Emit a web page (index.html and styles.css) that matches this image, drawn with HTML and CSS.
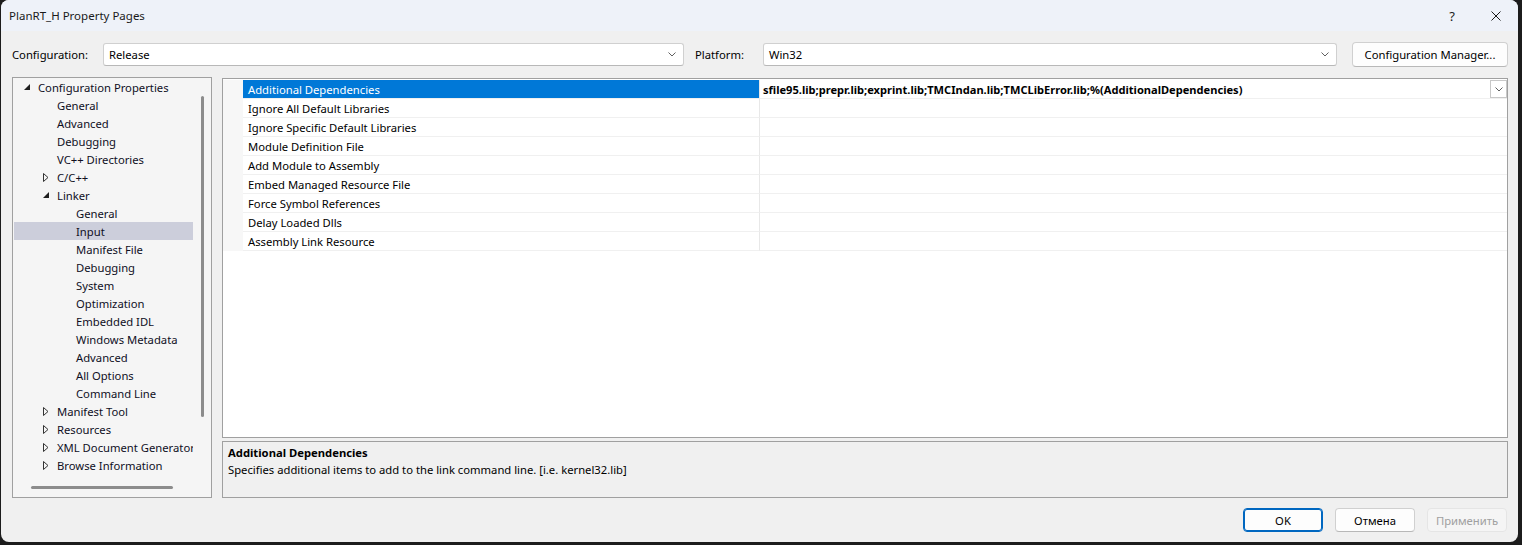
FILE: index.html
```html
<!DOCTYPE html>
<html lang="en">
<head>
    <meta charset="UTF-8">
    <title>PlanRT_H Property Pages</title>
    <link rel="stylesheet" href="styles.css">
</head>
<body>
    <div class="window">
        <div class="titlebar">
            <span class="title">PlanRT_H Property Pages</span>
            <div class="caption-btns">
                <span class="cap-btn help">?</span>
                <span class="cap-btn close">
                    <svg width="10" height="10" viewBox="0 0 10 10"><path d="M0.5 0.5 L9.5 9.5 M9.5 0.5 L0.5 9.5" stroke="#1a1a1a" stroke-width="1" fill="none"/></svg>
                </span>
            </div>
        </div>

        <div class="config-row">
            <label class="cfg-label">Configuration:</label>
            <div class="combo combo-config">
                <span>Release</span>
                <svg class="chev" width="8" height="5" viewBox="0 0 8 5"><path d="M0.5 0.5 L4 4 L7.5 0.5" stroke="#606060" fill="none"/></svg>
            </div>
            <label class="cfg-label platform-label">Platform:</label>
            <div class="combo combo-platform">
                <span>Win32</span>
                <svg class="chev" width="8" height="5" viewBox="0 0 8 5"><path d="M0.5 0.5 L4 4 L7.5 0.5" stroke="#606060" fill="none"/></svg>
            </div>
            <button class="btn btn-manager">Configuration Manager...</button>
        </div>

        <div class="main">
            <div class="tree">
                <div class="tree-items">
                    <div class="node lvl0"><span class="exp"><svg width="6" height="6" viewBox="0 0 6 6"><path d="M6 0 L6 6 L0 6 Z" fill="#1e1e1e"/></svg></span>Configuration Properties</div>
                    <div class="node lvl1"><span class="exp"></span>General</div>
                    <div class="node lvl1"><span class="exp"></span>Advanced</div>
                    <div class="node lvl1"><span class="exp"></span>Debugging</div>
                    <div class="node lvl1"><span class="exp"></span>VC++ Directories</div>
                    <div class="node lvl1"><span class="exp"><svg width="6" height="9" viewBox="0 0 6 9"><path d="M0.5 0.5 L5 4.5 L0.5 8.5 Z" fill="none" stroke="#333"/></svg></span>C/C++</div>
                    <div class="node lvl1"><span class="exp"><svg width="6" height="6" viewBox="0 0 6 6"><path d="M6 0 L6 6 L0 6 Z" fill="#1e1e1e"/></svg></span>Linker</div>
                    <div class="node lvl2"><span class="exp"></span>General</div>
                    <div class="node lvl2 selected"><span class="exp"></span>Input</div>
                    <div class="node lvl2"><span class="exp"></span>Manifest File</div>
                    <div class="node lvl2"><span class="exp"></span>Debugging</div>
                    <div class="node lvl2"><span class="exp"></span>System</div>
                    <div class="node lvl2"><span class="exp"></span>Optimization</div>
                    <div class="node lvl2"><span class="exp"></span>Embedded IDL</div>
                    <div class="node lvl2"><span class="exp"></span>Windows Metadata</div>
                    <div class="node lvl2"><span class="exp"></span>Advanced</div>
                    <div class="node lvl2"><span class="exp"></span>All Options</div>
                    <div class="node lvl2"><span class="exp"></span>Command Line</div>
                    <div class="node lvl1"><span class="exp"><svg width="6" height="9" viewBox="0 0 6 9"><path d="M0.5 0.5 L5 4.5 L0.5 8.5 Z" fill="none" stroke="#333"/></svg></span>Manifest Tool</div>
                    <div class="node lvl1"><span class="exp"><svg width="6" height="9" viewBox="0 0 6 9"><path d="M0.5 0.5 L5 4.5 L0.5 8.5 Z" fill="none" stroke="#333"/></svg></span>Resources</div>
                    <div class="node lvl1"><span class="exp"><svg width="6" height="9" viewBox="0 0 6 9"><path d="M0.5 0.5 L5 4.5 L0.5 8.5 Z" fill="none" stroke="#333"/></svg></span>XML Document Generator</div>
                    <div class="node lvl1"><span class="exp"><svg width="6" height="9" viewBox="0 0 6 9"><path d="M0.5 0.5 L5 4.5 L0.5 8.5 Z" fill="none" stroke="#333"/></svg></span>Browse Information</div>
                </div>
                <div class="vscroll"><div class="vthumb"></div></div>
                <div class="hscroll"><div class="hthumb"></div></div>
                <div class="corner"></div>
            </div>

            <div class="right-col">
                <div class="grid">
                    <div class="prop-row selected">
                        <div class="margin"></div>
                        <div class="name">Additional Dependencies</div>
                        <div class="value">
                            <span class="val-text">sfile95.lib;prepr.lib;exprint.lib;TMCIndan.lib;TMCLibError.lib;%(AdditionalDependencies)</span>
                            <span class="drop-btn"><svg width="8" height="5" viewBox="0 0 8 5"><path d="M0.5 0.5 L4 4 L7.5 0.5" stroke="#606060" fill="none"/></svg></span>
                        </div>
                    </div>
                    <div class="prop-row"><div class="margin"></div><div class="name">Ignore All Default Libraries</div><div class="value"></div></div>
                    <div class="prop-row"><div class="margin"></div><div class="name">Ignore Specific Default Libraries</div><div class="value"></div></div>
                    <div class="prop-row"><div class="margin"></div><div class="name">Module Definition File</div><div class="value"></div></div>
                    <div class="prop-row"><div class="margin"></div><div class="name">Add Module to Assembly</div><div class="value"></div></div>
                    <div class="prop-row"><div class="margin"></div><div class="name">Embed Managed Resource File</div><div class="value"></div></div>
                    <div class="prop-row"><div class="margin"></div><div class="name">Force Symbol References</div><div class="value"></div></div>
                    <div class="prop-row"><div class="margin"></div><div class="name">Delay Loaded Dlls</div><div class="value"></div></div>
                    <div class="prop-row"><div class="margin"></div><div class="name">Assembly Link Resource</div><div class="value"></div></div>
                </div>
                <div class="desc">
                    <div class="desc-title">Additional Dependencies</div>
                    <div class="desc-text">Specifies additional items to add to the link command line. [i.e. kernel32.lib]</div>
                </div>
            </div>
        </div>

        <div class="footer">
            <button class="btn btn-dialog btn-default">OK</button>
            <button class="btn btn-dialog">Отмена</button>
            <button class="btn btn-dialog" disabled>Применить</button>
        </div>
    </div>
</body>
</html>
```

FILE: styles.css
```css
/* General */
body {
    margin: 0;
    background: #1c1c1c;
    font-family: 'Noto Sans', 'Segoe UI', sans-serif;
    font-size: 11.25px;
    color: #000;
}

.window {
    margin-left: 1px;
    width: 1517px;
    height: 542px;
    background: #f0f0f0;
    border-radius: 8px;
    overflow: hidden;
    display: flex;
    flex-direction: column;
}

/* Title bar */
.titlebar {
    height: 31px;
    flex: none;
    background: #eef2f9;
    display: flex;
    align-items: center;
    justify-content: space-between;
    padding-left: 8px;
}

.title {
    font-size: 11.5px;
    color: #1a1a1a;
}

.caption-btns {
    display: flex;
    height: 100%;
}

.cap-btn {
    width: 44px;
    display: flex;
    align-items: center;
    justify-content: center;
}

.help {
    font-size: 13px;
    color: #1a1a1a;
}

/* Configuration row */
.config-row {
    flex: none;
    margin-top: 11px;
    height: 25px;
    padding: 0 10px 0 11px;
    display: flex;
    align-items: center;
}

.cfg-label {
    width: 91px;
    flex: none;
}

.platform-label {
    width: 68px;
    margin-left: 11px;
}

.combo {
    height: 21px;
    background: #fff;
    border: 1px solid #d0d0d0;
    border-bottom-color: #b8b8b8;
    border-radius: 3px;
    display: flex;
    align-items: center;
    justify-content: space-between;
    padding: 0 7px 0 5px;
    box-sizing: content-box;
}

.combo-config {
    width: 567px;
    flex: none;
}

.combo-platform {
    flex: 1;
}

.btn {
    font-family: inherit;
    font-size: 11.25px;
    color: #000;
    background: #fdfdfd;
    border: 1px solid #d0d0d0;
    border-bottom-color: #b8b8b8;
    border-radius: 4px;
    padding: 0;
}

.btn-manager {
    width: 156px;
    height: 25px;
    margin-left: 15px;
    flex: none;
}

/* Main area */
.main {
    flex: none;
    margin-top: 10px;
    height: 421px;
    padding: 0 10px 0 11px;
    display: flex;
    gap: 10px;
}

/* Tree */
.tree {
    width: 198px;
    border: 1px solid #a0a0a0;
    background: #f5f5f5;
    display: grid;
    grid-template-columns: 180px 18px;
    grid-template-rows: 400px 19px;
}

.tree-items {
    overflow: hidden;
    padding: 0 0 0 1px;
}

.node {
    height: 18px;
    display: flex;
    align-items: center;
    white-space: nowrap;
    color: #0f0f1e;
}

.node.selected {
    background: #cccedb;
}

.lvl0 { padding-left: 10px; }
.lvl1 { padding-left: 29px; }
.lvl2 { padding-left: 48px; }

.exp {
    width: 14px;
    flex: none;
    display: flex;
    align-items: center;
}

.vthumb {
    margin: 18px 0 0 8px;
    width: 3px;
    height: 321px;
    background: #8c8c8c;
    border-radius: 2px;
}

.hthumb {
    margin: 8px 0 0 18px;
    width: 142px;
    height: 3px;
    background: #8c8c8c;
    border-radius: 2px;
}

/* Right column */
.right-col {
    flex: 1;
    display: flex;
    flex-direction: column;
    padding-top: 1px;
}

.grid {
    height: 357px;
    flex: none;
    border: 1px solid #a0a0a0;
    background: #fff;
    padding-top: 1px;
}

.prop-row {
    display: flex;
    height: 19px;
}

.prop-row .margin {
    width: 20px;
    flex: none;
    background: #f7f7f7;
}

.prop-row .name {
    width: 511px;
    flex: none;
    padding-left: 5px;
    border-bottom: 1px solid #f0f0f0;
    border-right: 1px solid #e8e8e8;
    display: flex;
    align-items: center;
    white-space: nowrap;
}

.prop-row.selected .name {
    background: #0078d7;
    color: #fff;
}

.prop-row .value {
    flex: 1;
    padding-left: 3px;
    border-bottom: 1px solid #f0f0f0;
    display: flex;
    align-items: center;
    justify-content: space-between;
}

.val-text {
    font-weight: bold;
    font-size: 11.1px;
    white-space: nowrap;
}

.drop-btn {
    width: 15px;
    height: 16px;
    border: 1px solid #c8c8c8;
    background: #fff;
    display: flex;
    align-items: center;
    justify-content: center;
}

/* Description */
.desc {
    flex: 1;
    margin-top: 3px;
    border: 1px solid #a0a0a0;
    background: #f0f0f0;
    padding: 2px 5px 0;
    line-height: 17px;
}

.desc-title {
    font-weight: bold;
}

/* Footer */
.footer {
    flex: none;
    margin-top: 10px;
    padding-right: 11px;
    display: flex;
    justify-content: flex-end;
    gap: 12px;
}

.btn-dialog {
    width: 80px;
    height: 24px;
}

.btn-default {
    border: 1px solid #0067c0;
    box-shadow: inset 0 0 0 1px #0067c0;
}

.btn-dialog:disabled {
    background: #f5f5f5;
    border-color: #e5e5e5;
    color: #a0a0a0;
}
```
